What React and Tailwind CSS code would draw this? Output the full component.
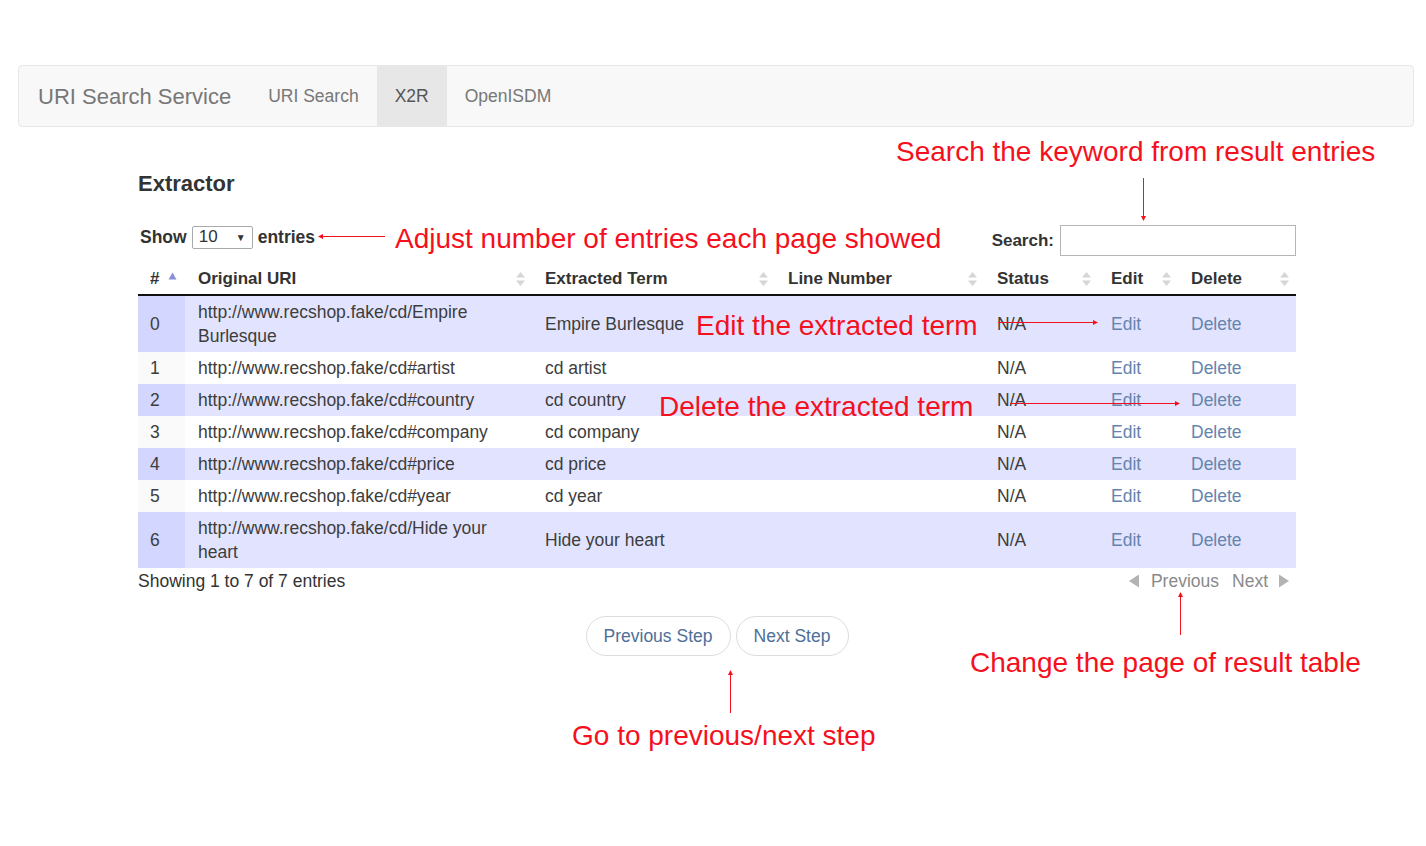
import React from 'react';

const rows = [
  { id: 0, uri: 'http://www.recshop.fake/cd/Empire Burlesque', term: 'Empire Burlesque' },
  { id: 1, uri: 'http://www.recshop.fake/cd#artist', term: 'cd artist' },
  { id: 2, uri: 'http://www.recshop.fake/cd#country', term: 'cd country' },
  { id: 3, uri: 'http://www.recshop.fake/cd#company', term: 'cd company' },
  { id: 4, uri: 'http://www.recshop.fake/cd#price', term: 'cd price' },
  { id: 5, uri: 'http://www.recshop.fake/cd#year', term: 'cd year' },
  { id: 6, uri: 'http://www.recshop.fake/cd/Hide your heart', term: 'Hide your heart' },
];

const SortBoth = () => (
  <svg width="11" height="16" viewBox="0 0 11 16" className="shrink-0">
    <path d="M5.5 1 L10 6.5 L1 6.5 Z" fill="#d6d6d6" />
    <path d="M5.5 15 L10 9.5 L1 9.5 Z" fill="#d6d6d6" />
  </svg>
);

const SortAsc = () => (
  <svg width="9" height="8" viewBox="0 0 9 8" className="shrink-0 -mt-[6px]">
    <path d="M4.5 0.5 L8.5 7.5 L0.5 7.5 Z" fill="#8b8fd6" />
  </svg>
);

const Header = ({ label, first }) => (
  <th className="h-[32px] p-0 border-b-2 border-[#111] text-left font-bold">
    <div className={`flex items-center justify-between ${first ? 'pl-[12px] pr-[7px]' : 'pl-[13px] pr-[6px]'}`}>
      <span>{label}</span>
      {first ? <span className="flex-1 pl-[9px] flex"><SortAsc /></span> : <SortBoth />}
    </div>
  </th>
);

const Note = ({ className, children }) => (
  <div className={`absolute text-[28px] leading-[32px] text-[#f5101e] whitespace-nowrap ${className}`}>
    {children}
  </div>
);

export default function App() {
  return (
    <div className="relative w-[1426px] h-[846px] bg-white text-[#333] font-['Liberation_Sans',Arial,sans-serif] overflow-hidden">
      {/* Navbar */}
      <div className="pt-[65px] pl-[18px] pr-[12px]">
        <div className="h-[62px] flex items-stretch bg-[#f8f8f8] border border-[#e7e7e7] rounded-[4px]">
          <div className="flex items-center pl-[19px] pr-[19px] text-[22px] text-[#777]">URI Search Service</div>
          <div className="flex items-center px-[18px] text-[17.5px] text-[#777]">URI Search</div>
          <div className="flex items-center px-[18px] text-[17.5px] text-[#555] bg-[#e7e7e7]">X2R</div>
          <div className="flex items-center px-[18px] text-[17.5px] text-[#777]">OpenISDM</div>
        </div>
      </div>

      {/* Content */}
      <div className="ml-[138px] w-[1158px]">
        <h2 className="mt-[43px] text-[22px] leading-[28px] font-bold text-[#333]">Extractor</h2>

        <div className="mt-[27px] flex justify-between items-start">
          <div className="h-[24px] flex items-center gap-[5px] pl-[2px] text-[17.5px] font-bold">
            <span>Show</span>
            <div className="w-[61px] h-[23px] border border-[#aaa] rounded-[2px] bg-white flex items-center justify-between pl-[6px] pr-[6px] font-normal text-[17px]">
              <span>10</span>
              <span className="text-[10px]">▼</span>
            </div>
            <span>entries</span>
          </div>
          <div className="h-[31px] flex items-center gap-[6px] text-[17px] font-bold">
            <span>Search:</span>
            <div className="w-[236px] h-[31px] border border-[#b5b5b5] bg-white" />
          </div>
        </div>

        <table className="mt-[7px] w-[1158px] table-fixed border-collapse text-[17.5px]">
          <colgroup>
            <col className="w-[47px]" />
            <col className="w-[347px]" />
            <col className="w-[243px]" />
            <col className="w-[209px]" />
            <col className="w-[114px]" />
            <col className="w-[80px]" />
            <col className="w-[118px]" />
          </colgroup>
          <thead className="text-[17px] text-[#333]">
            <tr>
              <Header label="#" first />
              <Header label="Original URI" />
              <Header label="Extracted Term" />
              <Header label="Line Number" />
              <Header label="Status" />
              <Header label="Edit" />
              <Header label="Delete" />
            </tr>
          </thead>
          <tbody className="leading-[24px] text-[#3d3d3d]">
            {rows.map((r) => {
              const odd = r.id % 2 === 0;
              return (
                <tr key={r.id} className={odd ? 'bg-[#e2e4ff]' : 'bg-white'}>
                  <td className={`py-[4px] pl-[12px] ${odd ? 'bg-[#d3d6ff]' : 'bg-[#fafafa]'}`}>{r.id}</td>
                  <td className="py-[4px] pl-[13px] pr-[13px]">{r.uri}</td>
                  <td className="py-[4px] pl-[13px] pr-[8px]">{r.term}</td>
                  <td className="py-[4px] pl-[13px]"></td>
                  <td className="py-[4px] pl-[13px]">N/A</td>
                  <td className="py-[4px] pl-[13px] text-[#6584ad]">Edit</td>
                  <td className="py-[4px] pl-[13px] text-[#6584ad]">Delete</td>
                </tr>
              );
            })}
          </tbody>
        </table>

        <div className="flex justify-between items-center h-[24px] mt-[1px] text-[17.5px]">
          <span className="text-[#333]">Showing 1 to 7 of 7 entries</span>
          <div className="flex items-center text-[#8a8a8a] pr-[6px]">
            <svg width="12" height="14" viewBox="0 0 12 14"><path d="M11 0.5 L11 13.5 L1 7 Z" fill="#b3b3b3" /></svg>
            <span className="ml-[11px]">Previous</span>
            <span className="ml-[13px]">Next</span>
            <svg width="12" height="14" viewBox="0 0 12 14" className="ml-[10px]"><path d="M1 0.5 L1 13.5 L11 7 Z" fill="#b3b3b3" /></svg>
          </div>
        </div>

        <div className="mt-[23px] flex justify-center gap-[5px] text-[17.5px] text-[#4f6f98]">
          <div className="w-[145px] h-[40px] rounded-[20px] border border-[#ddd] bg-white flex items-center justify-center">Previous Step</div>
          <div className="w-[113px] h-[40px] rounded-[20px] border border-[#ddd] bg-white flex items-center justify-center">Next Step</div>
        </div>
      </div>

      {/* Annotations */}
      <Note className="left-[896px] top-[136px]">Search the keyword from result entries</Note>
      <Note className="left-[395px] top-[223px]">Adjust number of entries each page showed</Note>
      <Note className="left-[696px] top-[310px]">Edit the extracted term</Note>
      <Note className="left-[659px] top-[391px]">Delete the extracted term</Note>
      <Note className="left-[970px] top-[647px]">Change the page of result table</Note>
      <Note className="left-[572px] top-[720px]">Go to previous/next step</Note>

      <svg className="absolute inset-0 pointer-events-none" width="1426" height="846">
        <g stroke="#f5101e" strokeWidth="1" fill="#f5101e">
          <line x1="1143.5" y1="178" x2="1143.5" y2="217" />
          <path d="M1141 216 L1146 216 L1143.5 221 Z" stroke="none" />
          <line x1="385" y1="236.5" x2="322" y2="236.5" />
          <path d="M323 234 L323 239 L318 236.5 Z" stroke="none" />
          <line x1="998" y1="322.5" x2="1094" y2="322.5" />
          <path d="M1093 320 L1093 325 L1098 322.5 Z" stroke="none" />
          <line x1="1010" y1="403.5" x2="1176" y2="403.5" />
          <path d="M1175 401 L1175 406 L1180 403.5 Z" stroke="none" />
          <line x1="1180.5" y1="635" x2="1180.5" y2="596" />
          <path d="M1178 597 L1183 597 L1180.5 592 Z" stroke="none" />
          <line x1="730.5" y1="713" x2="730.5" y2="674" />
          <path d="M728 675 L733 675 L730.5 670 Z" stroke="none" />
        </g>
      </svg>
    </div>
  );
}
